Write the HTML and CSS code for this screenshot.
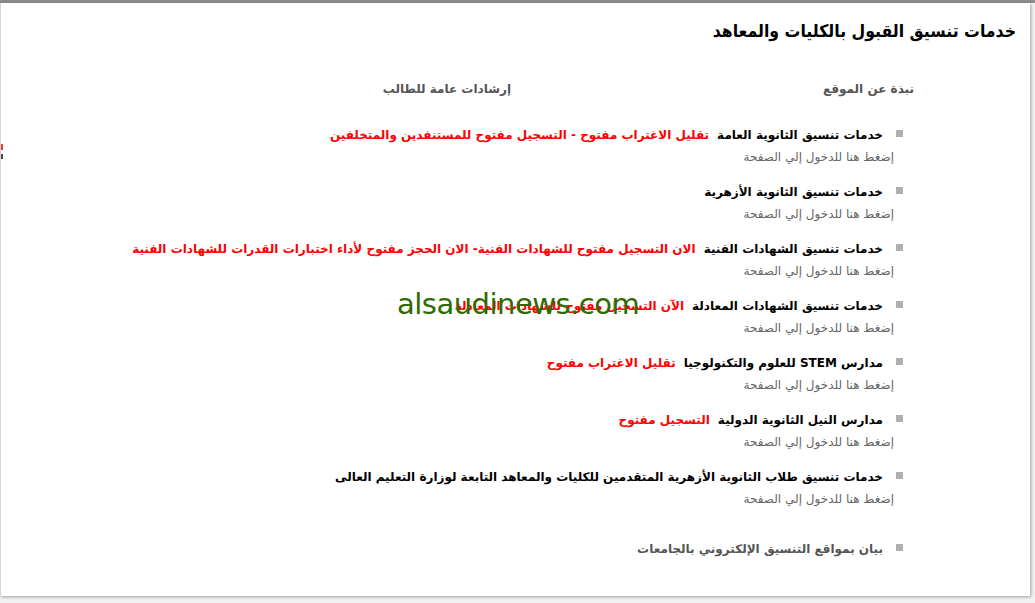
FILE: index.html
```html
<!DOCTYPE html>
<html lang="ar" dir="rtl">
<head>
<meta charset="utf-8">
<title>خدمات تنسيق القبول بالكليات والمعاهد</title>
<link rel="stylesheet" href="styles.css">
</head>
<body>
<div class="topbar"></div>
<div class="card">
  <h1 class="title">خدمات تنسيق القبول بالكليات والمعاهد</h1>
  <nav class="nav">
    <span class="nav-item">نبذة عن الموقع</span>
    <span class="nav-item">إرشادات عامة للطالب</span>
  </nav>
  <ul class="list">
    <li class="item">
      <div class="head"><span class="bullet"></span><span class="name">خدمات تنسيق الثانوية العامة</span><span class="note">تقليل الاغتراب مفتوح - التسجيل مفتوح للمستنفدين والمتخلفين</span></div>
      <div class="sub">إضغط هنا للدخول إلي الصفحة</div>
    </li>
    <li class="item">
      <div class="head"><span class="bullet"></span><span class="name">خدمات تنسيق الثانوية الأزهرية</span></div>
      <div class="sub">إضغط هنا للدخول إلي الصفحة</div>
    </li>
    <li class="item">
      <div class="head"><span class="bullet"></span><span class="name">خدمات تنسيق الشهادات الفنية</span><span class="note">الان التسجيل مفتوح للشهادات الفنية- الان الحجز مفتوح لأداء اختبارات القدرات للشهادات الفنية</span></div>
      <div class="sub">إضغط هنا للدخول إلي الصفحة</div>
    </li>
    <li class="item">
      <div class="head"><span class="bullet"></span><span class="name">خدمات تنسيق الشهادات المعادلة</span><span class="note">الآن التسجيل مفتوح للشهادات المعادلة</span></div>
      <div class="sub">إضغط هنا للدخول إلي الصفحة</div>
    </li>
    <li class="item">
      <div class="head"><span class="bullet"></span><span class="name">مدارس STEM للعلوم والتكنولوجيا</span><span class="note">تقليل الاغتراب مفتوح</span></div>
      <div class="sub">إضغط هنا للدخول إلي الصفحة</div>
    </li>
    <li class="item">
      <div class="head"><span class="bullet"></span><span class="name">مدارس النيل الثانوية الدولية</span><span class="note">التسجيل مفتوح</span></div>
      <div class="sub">إضغط هنا للدخول إلي الصفحة</div>
    </li>
    <li class="item">
      <div class="head"><span class="bullet"></span><span class="name">خدمات تنسيق طلاب الثانوية الأزهرية المتقدمين للكليات والمعاهد التابعة لوزارة التعليم العالى</span></div>
      <div class="sub">إضغط هنا للدخول إلي الصفحة</div>
    </li>
    <li class="item item-last">
      <div class="head"><span class="bullet"></span><span class="name name-gray">بيان بمواقع التنسيق الإلكتروني بالجامعات</span></div>
    </li>
  </ul>
  <div class="watermark" dir="ltr">alsaudinews.com</div>
  <div class="edge-mark edge-red"></div>
  <div class="edge-mark edge-dark"></div>
</div>
</body>
</html>
```

FILE: styles.css
```css
html, body {
  margin: 0;
  padding: 0;
}
body {
  background: #f2f2f2;
  font-family: "DejaVu Sans", "Noto Sans", sans-serif;
  width: 1035px;
  height: 603px;
  overflow: hidden;
}
.topbar {
  height: 3px;
  background: #8c8c8c;
}
.card {
  position: relative;
  width: 1030px;
  height: 593px;
  margin-left: 0;
  margin-right: 5px;
  background: #fff;
  box-shadow: 1px 1px 3px rgba(0,0,0,0.35);
  border-left: 1px solid #d6d6d6;
  box-sizing: border-box;
  overflow: hidden;
}
.title {
  margin: 13px 14px 0 0;
  font-family: "DejaVu Sans Condensed", "DejaVu Sans", sans-serif;
  font-size: 17.5px;
  line-height: 30px;
  font-weight: bold;
  color: #000;
  white-space: nowrap;
}
.nav {
  display: flex;
  margin-top: 33px;
  padding-right: 116px;
  height: 20px;
  line-height: 20px;
}
.nav-item {
  width: 403px;
  font-size: 12px;
  font-weight: bold;
  color: #555;
  white-space: nowrap;
}
.list {
  list-style: none;
  margin: 26px 0 0 0;
  padding: 0 127px 0 0;
}
.item {
  margin-bottom: 15px;
}
.item-last {
  margin-top: 30px;
}
.head {
  display: flex;
  align-items: flex-start;
  height: 20px;
  line-height: 20px;
  white-space: nowrap;
}
.bullet {
  flex: none;
  width: 7px;
  height: 7px;
  margin-top: 5px;
  margin-left: 13px;
  background: #b0b0b0;
}
.name {
  font-size: 12px;
  font-weight: bold;
  color: #000;
}
.name-gray {
  color: #555;
}
.note {
  margin-right: 8px;
  font-size: 12px;
  font-weight: bold;
  color: #f00;
}
.sub {
  margin-top: 2px;
  margin-right: 9px;
  height: 20px;
  line-height: 20px;
  font-size: 12px;
  color: #666;
  white-space: nowrap;
}
.watermark {
  position: absolute;
  left: 396px;
  top: 283px;
  font-family: "Comic Sans MS", "DejaVu Sans", sans-serif;
  font-size: 29px;
  line-height: 36px;
  color: #2e6b00;
  letter-spacing: -0.5px;
  white-space: nowrap;
}
.edge-mark {
  position: absolute;
  left: 0;
  width: 2px;
}
.edge-red {
  top: 141px;
  height: 6px;
  background: #e04040;
}
.edge-dark {
  top: 151px;
  height: 5px;
  background: #444;
}
```
